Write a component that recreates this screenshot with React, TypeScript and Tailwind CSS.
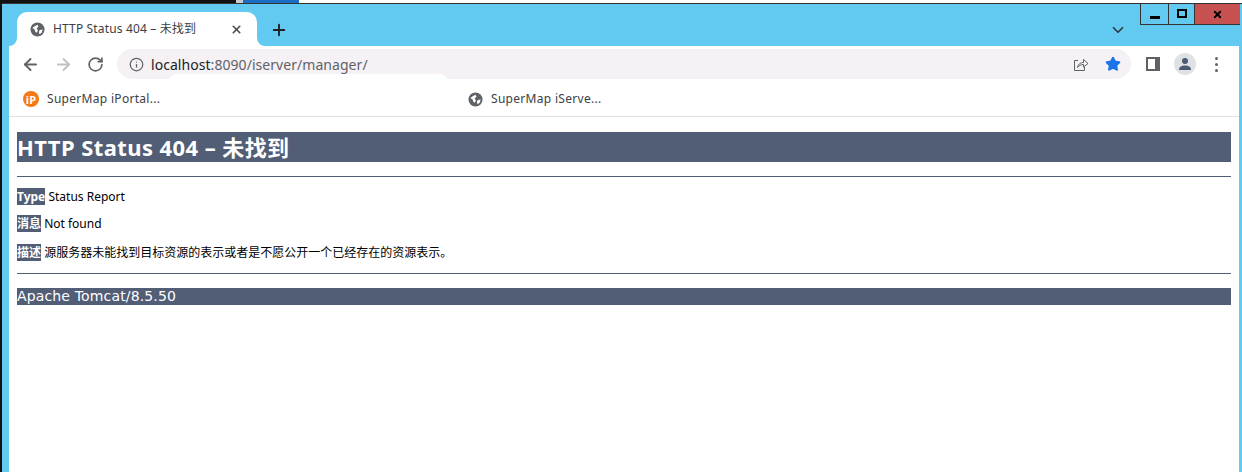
import React from 'react';
import { ArrowLeft, ArrowRight, ChevronDown, Info, Plus, RotateCw, Star, X } from 'lucide-react';

const UI_FONT = "font-['Noto_Sans','Noto_Sans_CJK_SC',sans-serif]";

function Globe({ className }: { className?: string }) {
  return (
    <svg viewBox="0 0 16 16" className={className}>
      <circle cx="8" cy="8" r="7.5" fill="#5f6368" />
      <path d="M2.5 6.5 L5 4.5 L8 3 L9 5 L7 7 L8.5 9 L7 11.5 L5.5 10 L5 8 Z" fill="#fff" />
      <path d="M10.5 8.5 L13.5 8 L12.5 11.5 L10 13 L9.5 10.5 Z" fill="#fff" />
    </svg>
  );
}

function PortalIcon() {
  return (
    <span className="flex h-4 w-4 items-center justify-center rounded-full bg-[#f47a16] text-[11px] leading-none font-bold text-white">
      iP
    </span>
  );
}

function ShareIcon() {
  return (
    <svg viewBox="0 0 16 16" className="h-4 w-4" fill="none" stroke="#5f6368" strokeWidth="1">
      <path d="M5 4.5 H1.5 V14.5 H11.5 V11" />
      <path d="M4.5 11.5 C5 8 7.5 6.5 10.5 6.5 V3.5 L15 7.5 L10.5 11 V8.5 C8 8.5 6 9.5 4.5 11.5 Z" />
    </svg>
  );
}

function WindowButton({ className, children }: { className: string; children: React.ReactNode }) {
  return (
    <div className={`flex h-full items-center justify-center border-r border-[#333] ${className}`}>
      {children}
    </div>
  );
}

function Label({ children }: { children: React.ReactNode }) {
  return <b className="bg-[#525d76] font-bold text-white">{children}</b>;
}

export default function App() {
  return (
    <div className={`flex h-[472px] w-[1242px] flex-col overflow-hidden bg-black ${UI_FONT}`}>
      {/* whatever sits behind the window */}
      <div className="flex h-[3px] shrink-0">
        <div className="w-[236px] bg-[#111]" />
        <div className="w-[7px] bg-[#c4ced2]" />
        <div className="w-[56px] bg-[#1a6fc4]" />
        <div className="flex-1 bg-white" />
      </div>

      <div className="flex min-h-0 flex-1">
        <div className="w-[2px] shrink-0 bg-[#111]" />
        <div className="relative flex flex-1 flex-col border-t border-[#333] bg-[#62c9f1] pr-[3px] pl-[7px]">
          {/* window controls */}
          <div className="absolute top-0 right-[2px] flex h-[21px] border-b border-l border-[#333]">
            <WindowButton className="w-[28px]">
              <div className="mt-[6px] h-[3px] w-[10px] bg-black" />
            </WindowButton>
            <WindowButton className="w-[26px]">
              <div className="mb-[1px] h-[9px] w-[10px] border-2 border-black" />
            </WindowButton>
            <div className="flex h-full w-[45px] items-center justify-center bg-[#c75050]">
              <X size={11} strokeWidth={4} color="#000" />
            </div>
          </div>

          {/* tab strip */}
          <div className="relative flex h-[42px] shrink-0 items-end pl-[8px]">
            <div className="relative flex h-[34px] w-[240px] items-center rounded-t-[10px] bg-white pr-[14px] pl-[13px]">
              <div className="absolute bottom-0 -left-[8px] h-[8px] w-[8px] bg-white">
                <div className="h-full w-full rounded-br-[8px] bg-[#62c9f1]" />
              </div>
              <div className="absolute -right-[8px] bottom-0 h-[8px] w-[8px] bg-white">
                <div className="h-full w-full rounded-bl-[8px] bg-[#62c9f1]" />
              </div>
              <Globe className="h-[15px] w-[15px] shrink-0" />
              <span className="ml-[8px] flex-1 text-[12px] tracking-[0.15px] whitespace-nowrap text-[#3c4043]">HTTP Status 404 – 未找到</span>
              <X size={13} strokeWidth={3} color="#45494d" />
            </div>
            <Plus size={18} strokeWidth={2.5} color="#202124" className="mb-[7px] ml-[13px]" />
            <ChevronDown size={18} strokeWidth={2.2} color="#30373c" className="absolute right-[112px] bottom-[7px]" />
          </div>

          {/* toolbar */}
          <div className="relative flex h-[36px] shrink-0 items-center bg-white">
            <ArrowLeft size={19} strokeWidth={2.4} color="#5f6368" className="ml-[12px]" />
            <ArrowRight size={19} strokeWidth={2.4} color="#bdc1c6" className="ml-[14px]" />
            <RotateCw size={17} strokeWidth={2.4} color="#5f6368" className="ml-[14px]" />
            <div className="ml-[13px] flex h-[30px] w-[1014px] items-center rounded-full bg-[#f5f1f5] pr-[10px] pl-[12px]">
              <Info size={15} strokeWidth={2} color="#5f6368" />
              <span className="ml-[7px] flex-1 text-[14px] tracking-[0.05px] text-[#5f6368]">
                <span className="text-[#202124]">localhost</span>:8090/iserver/manager/
              </span>
              <ShareIcon />
              <Star size={16} fill="#1a73e8" color="#1a73e8" className="ml-[16px]" />
            </div>
            <svg viewBox="0 0 14 14" className="ml-[15px] h-[14px] w-[14px]">
              <rect width="14" height="14" fill="#5f6368" />
              <rect x="2" y="2" width="7" height="10" fill="#fff" />
            </svg>
            <div className="ml-[14px] flex h-[22px] w-[22px] items-center justify-center rounded-full bg-[#dfe1e5]">
              <svg viewBox="0 0 14 14" className="h-[14px] w-[14px]" fill="#4d5a75">
                <circle cx="7" cy="4" r="3" />
                <path d="M1 13 C1 9.5 4 8.5 7 8.5 C10 8.5 13 9.5 13 13 Z" />
              </svg>
            </div>
            <div className="ml-[19px] flex flex-col gap-[3px]">
              <div className="h-[3px] w-[3px] rounded-full bg-[#5f6368]" />
              <div className="h-[3px] w-[3px] rounded-full bg-[#5f6368]" />
              <div className="h-[3px] w-[3px] rounded-full bg-[#5f6368]" />
            </div>
            {/* bookmarks bar edge biting into the omnibox */}
            <div className="absolute top-[28px] left-[160px] h-[8px] w-[279px] rounded-t-[14px] bg-white" />
          </div>

          {/* bookmarks */}
          <div className="flex h-[35px] shrink-0 items-center border-b border-[#e0e0e0] bg-white text-[12px] tracking-[0.3px] text-[#3c4043]">
            <div className="ml-[14px] flex w-[445px] items-center gap-[8px]">
              <PortalIcon />
              <span>SuperMap iPortal...</span>
            </div>
            <div className="flex items-center gap-[8px]">
              <Globe className="h-[15px] w-[15px]" />
              <span>SuperMap iServe...</span>
            </div>
          </div>

          {/* page */}
          <div className="flex-1 bg-white px-[8px] pt-[15px] text-[12px] text-black">
            <h1 className="h-[30px] bg-[#525d76] text-[22px] leading-[30px] font-bold tracking-[0.42px] text-white">HTTP Status 404 – 未找到</h1>
            <div className="mt-[14px] h-px bg-[#525d76]" />
            <p className="mt-[12px] h-[16px] leading-[16px]">
              <Label>Type</Label> Status Report
            </p>
            <p className="mt-[11px] h-[16px] leading-[16px]">
              <Label>消息</Label> Not found
            </p>
            <p className="mt-[13px] h-[16px] leading-[16px]">
              <Label>描述</Label> 源服务器未能找到目标资源的表示或者是不愿公开一个已经存在的资源表示。
            </p>
            <div className="mt-[12px] h-px bg-[#525d76]" />
            <h3 className="mt-[14px] h-[17px] bg-[#525d76] font-['DejaVu_Sans',sans-serif] text-[14px] leading-[17px] font-normal tracking-[0.15px] text-white">Apache Tomcat/8.5.50</h3>
          </div>
        </div>
      </div>
    </div>
  );
}
